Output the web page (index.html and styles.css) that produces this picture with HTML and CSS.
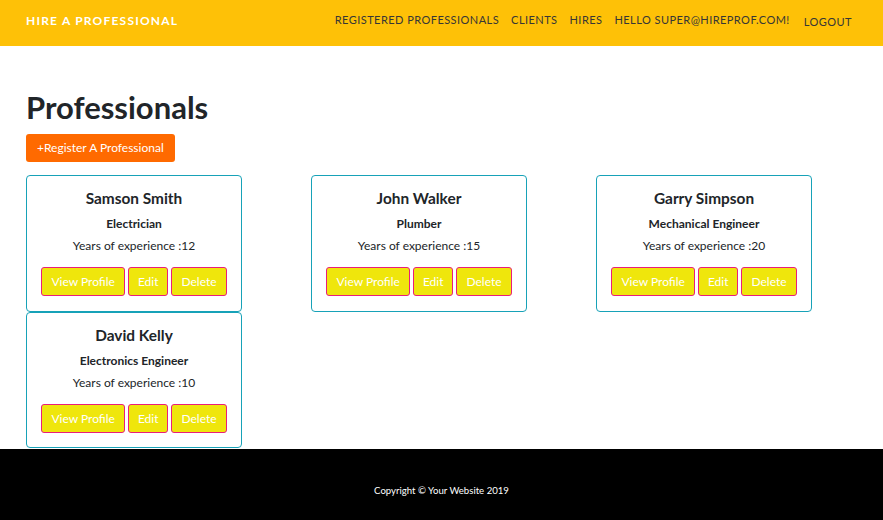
FILE: index.html
```html
<!DOCTYPE html>
<html>
<head>
<meta charset="utf-8">
<link rel="stylesheet" href="styles.css">
</head>
<body>
<nav class="navbar">
  <a class="brand" href="#">Hire A Professional</a>
  <ul class="nav-links">
    <li><a href="#">Registered Professionals</a></li>
    <li><a href="#">Clients</a></li>
    <li><a href="#">Hires</a></li>
    <li><a href="#">Hello super@hireprof.com!</a></li>
    <li><a href="#" class="logout">Logout</a></li>
  </ul>
</nav>
<main class="content">
  <h1 class="title">Professionals</h1>
  <a href="#" class="btn-register">+Register A Professional</a>
  <div class="grid">
    <div class="cell">
      <div class="card">
        <h2 class="name">Samson Smith</h2>
        <p class="job">Electrician</p>
        <p class="years">Years of experience :12</p>
        <div class="actions"><a class="btn" href="#">View Profile</a><a class="btn" href="#">Edit</a><a class="btn" href="#">Delete</a></div>
      </div>
      <div class="card">
        <h2 class="name">David Kelly</h2>
        <p class="job">Electronics Engineer</p>
        <p class="years">Years of experience :10</p>
        <div class="actions"><a class="btn" href="#">View Profile</a><a class="btn" href="#">Edit</a><a class="btn" href="#">Delete</a></div>
      </div>
    </div>
    <div class="cell">
      <div class="card">
        <h2 class="name">John Walker</h2>
        <p class="job">Plumber</p>
        <p class="years">Years of experience :15</p>
        <div class="actions"><a class="btn" href="#">View Profile</a><a class="btn" href="#">Edit</a><a class="btn" href="#">Delete</a></div>
      </div>
    </div>
    <div class="cell">
      <div class="card">
        <h2 class="name">Garry Simpson</h2>
        <p class="job">Mechanical Engineer</p>
        <p class="years">Years of experience :20</p>
        <div class="actions"><a class="btn" href="#">View Profile</a><a class="btn" href="#">Edit</a><a class="btn" href="#">Delete</a></div>
      </div>
    </div>
  </div>
</main>
<footer class="footer">Copyright © Your Website 2019</footer>
</body>
</html>
```
FILE: styles.css
```css
* { box-sizing: border-box; }
html, body { margin: 0; padding: 0; }
body {
  font-family: Lato, "Open Sans", sans-serif;
  color: #212529;
  background: #fff;
  width: 883px;
  height: 520px;
  overflow: hidden;
  display: flex;
  flex-direction: column;
}
a { text-decoration: none; }
.navbar {
  flex: none;
  background: #fec107;
  height: 46px;
  display: flex;
  align-items: center;
  justify-content: space-between;
  padding: 0 31px 6px 26px;
}
.brand {
  color: #fff;
  font-weight: 700;
  font-size: 12px;
  letter-spacing: 1.2px;
  text-transform: uppercase;
  margin-top: 1px;
}
.nav-links {
  list-style: none;
  margin: 0;
  padding: 0;
  display: flex;
  gap: 12px;
}
.nav-links a {
  color: #363636;
  font-size: 11px;
  letter-spacing: 0.45px;
  text-transform: uppercase;
  display: block;
}
.nav-links .logout { margin-left: 2px; margin-top: 2px; }
.content {
  padding: 0 0 0 26px;
  flex: 1;
}
.title {
  font-size: 31px;
  font-weight: 700;
  margin: 43px 0 0 0;
  line-height: 36px;
  color: #212529;
}
.btn-register {
  display: block;
  width: fit-content;
  margin-top: 9px;
  background: #ff6a00;
  color: #fff;
  font-size: 12px;
  padding: 0 11px;
  height: 28px;
  line-height: 28px;
  border-radius: 3px;
}
.grid {
  display: grid;
  grid-template-columns: 285px 285px 285px;
  margin-top: 13px;
}
.card {
  width: 216px;
  border: 1px solid #17a2b8;
  border-radius: 4px;
  text-align: center;
  padding: 13px 0 0;
  height: 137px;
}
.card + .card { height: 136px; }
.name {
  font-size: 15.4px;
  font-weight: 700;
  margin: 0;
  line-height: 19px;
}
.job {
  font-size: 12px;
  font-weight: 700;
  margin: 8px 0 0;
  line-height: 15px;
}
.years {
  font-size: 12px;
  margin: 7px 0 0;
  line-height: 15px;
}
.actions {
  display: flex;
  justify-content: center;
  gap: 3px;
  margin-top: 14px;
}
.btn {
  display: inline-block;
  background: #efe60c;
  border: 1px solid #e91e7a;
  border-radius: 3px;
  color: #fff;
  font-size: 12px;
  height: 29px;
  line-height: 27px;
  padding: 0 9px;
}
.footer {
  flex: none;
  background: #000;
  color: #fff;
  height: 71px;
  font-size: 9.6px;
  text-align: center;
  padding-top: 36px;
}
```
